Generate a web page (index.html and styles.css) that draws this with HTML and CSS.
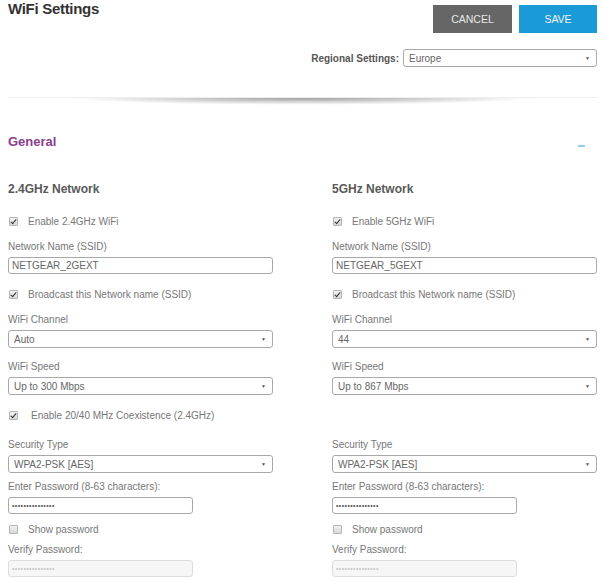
FILE: index.html
```html
<!DOCTYPE html>
<html lang="en">
<head>
    <meta charset="UTF-8">
    <meta name="viewport" content="width=device-width, initial-scale=1.0">
    <title>WiFi Settings</title>
    <link rel="stylesheet" href="styles.css">
</head>
<body>
    <div class="header">
        <h1 class="title">WiFi Settings</h1>
        <div class="actions">
            <div class="buttons">
                <button class="btn btn-cancel">CANCEL</button>
                <button class="btn btn-save">SAVE</button>
            </div>
            <div class="region">
                <span class="region-label">Regional Settings:</span>
                <div class="select region-select"><select><option>Europe</option></select></div>
            </div>
        </div>
    </div>

    <div class="divider"></div>

    <div class="section-head">
        <h2 class="section-title">General</h2>
        <span class="collapse"></span>
    </div>

    <div class="columns">
        <div class="col">
            <h3 class="net-title">2.4GHz Network</h3>
            <label class="check"><input type="checkbox" checked> Enable 2.4GHz WiFi</label>
            <div class="field">
                <label>Network Name (SSID)</label>
                <input class="text" type="text" value="NETGEAR_2GEXT">
            </div>
            <label class="check"><input type="checkbox" checked> Broadcast this Network name (SSID)</label>
            <div class="field">
                <label>WiFi Channel</label>
                <div class="select"><select><option>Auto</option></select></div>
            </div>
            <div class="field">
                <label>WiFi Speed</label>
                <div class="select"><select><option>Up to 300 Mbps</option></select></div>
            </div>
            <label class="check check-wide"><input type="checkbox" checked> Enable 20/40 MHz Coexistence (2.4GHz)</label>
            <div class="field loose">
                <label>Security Type</label>
                <div class="select"><select><option>WPA2-PSK [AES]</option></select></div>
            </div>
            <div class="field tight">
                <label>Enter Password (8-63 characters):</label>
                <input class="text pass" type="password" value="passwordpasswor">
            </div>
            <label class="check tight"><input type="checkbox"> Show password</label>
            <div class="field tight">
                <label>Verify Password:</label>
                <input class="text pass" type="password" value="passwordpasswor" disabled>
            </div>
        </div>

        <div class="col">
            <h3 class="net-title">5GHz Network</h3>
            <label class="check"><input type="checkbox" checked> Enable 5GHz WiFi</label>
            <div class="field">
                <label>Network Name (SSID)</label>
                <input class="text" type="text" value="NETGEAR_5GEXT">
            </div>
            <label class="check"><input type="checkbox" checked> Broadcast this Network name (SSID)</label>
            <div class="field">
                <label>WiFi Channel</label>
                <div class="select"><select><option>44</option></select></div>
            </div>
            <div class="field">
                <label>WiFi Speed</label>
                <div class="select"><select><option>Up to 867 Mbps</option></select></div>
            </div>
            <div class="check spacer"></div>
            <div class="field loose">
                <label>Security Type</label>
                <div class="select"><select><option>WPA2-PSK [AES]</option></select></div>
            </div>
            <div class="field tight">
                <label>Enter Password (8-63 characters):</label>
                <input class="text pass" type="password" value="passwordpasswor">
            </div>
            <label class="check tight"><input type="checkbox"> Show password</label>
            <div class="field tight">
                <label>Verify Password:</label>
                <input class="text pass" type="password" value="passwordpasswor" disabled>
            </div>
        </div>
    </div>
</body>
</html>
```

FILE: styles.css
```css
html, body {
    margin: 0;
    overflow: hidden;
}

body {
    font-family: "Liberation Sans", Arial, sans-serif;
    font-size: 10px;
    color: #777;
    background: #fff;
    padding: 0 7px 0 8px;
}

/* header */
.header {
    display: flex;
    justify-content: space-between;
    align-items: flex-start;
}

.title {
    margin: 0;
    font-size: 15px;
    line-height: 18px;
    font-weight: bold;
    color: #333;
    letter-spacing: -0.3px;
}

.actions {
    display: flex;
    flex-direction: column;
    align-items: flex-end;
}

.buttons {
    display: flex;
    gap: 7px;
    margin-top: 5px;
}

.btn {
    width: 79px;
    height: 28px;
    border: none;
    border-radius: 0;
    font-family: inherit;
    font-size: 10.5px;
    color: #f2f2f2;
    cursor: pointer;
}

.btn-cancel {
    background: #666;
    color: #e6e6e6;
}

.btn-save {
    width: 78px;
    background: #1a9bd8;
}

.region {
    display: flex;
    align-items: center;
    margin-top: 16px;
    height: 18px;
}

.region-label {
    font-size: 10px;
    font-weight: bold;
    color: #555;
    margin-right: 4px;
}

.region-select {
    width: 194px;
}

.divider {
    margin-top: 30px;
    height: 8px;
    border-top: 1px solid #eee;
    background: radial-gradient(ellipse 46% 100% at 50% 0, rgba(0, 0, 0, 0.38), rgba(0, 0, 0, 0) 85%);
}

/* section */
.section-head {
    display: flex;
    justify-content: space-between;
    align-items: center;
    margin-top: 28px;
    padding-right: 12px;
}

.section-title {
    margin: 0;
    font-size: 13px;
    line-height: 16px;
    font-weight: bold;
    color: #8a3e8e;
}

.collapse {
    width: 7px;
    height: 2px;
    background: #8cd0ec;
    margin-top: 7px;
}

.columns {
    display: grid;
    grid-template-columns: 265px 265px;
    column-gap: 59px;
    margin-top: 32px;
}

.net-title {
    margin: 0;
    font-size: 12px;
    line-height: 14px;
    font-weight: bold;
    color: #595959;
}

/* checkboxes */
.check {
    display: flex;
    align-items: center;
    height: 14px;
    margin-top: 13px;
    color: #777;
}

.net-title + .check {
    margin-top: 18px;
}

.check input {
    appearance: none;
    -webkit-appearance: none;
    position: relative;
    width: 9px;
    height: 9px;
    margin: 0 10px 0 1px;
    border: 1px solid #b5b5b5;
    border-radius: 1px;
    background: linear-gradient(#f2f2f2, #d8d8d8);
}

.check input:checked::after {
    content: "";
    position: absolute;
    left: 2px;
    top: 0;
    width: 2px;
    height: 5px;
    border: solid #333;
    border-width: 0 1.5px 1.5px 0;
    transform: rotate(40deg);
}

.check-wide input {
    margin-right: 13px;
}

/* fields */
.field {
    margin-top: 13px;
}

.field label {
    display: block;
    line-height: 12px;
    margin-bottom: 4px;
    color: #777;
}

.loose {
    margin-top: 17px;
}

.tight {
    margin-top: 8px;
}

.text {
    display: block;
    box-sizing: border-box;
    width: 100%;
    height: 17px;
    padding: 0 3px;
    border: 1px solid #a8a8a8;
    border-radius: 3px;
    font-family: inherit;
    font-size: 10px;
    color: #666;
    outline: none;
}

.pass {
    width: 185px;
    font-size: 7px;
    letter-spacing: 0.4px;
    color: #555;
}

.pass:disabled {
    background: #f6f6f6;
    border-color: #ddd;
    color: #c8c8c8;
}

.select {
    position: relative;
}

.select select {
    appearance: none;
    -webkit-appearance: none;
    display: block;
    box-sizing: border-box;
    width: 100%;
    height: 18px;
    padding: 0 16px 0 5px;
    border: 1px solid #a8a8a8;
    border-radius: 3px;
    background: #fff;
    font-family: inherit;
    font-size: 10px;
    color: #666;
    outline: none;
}

.select::after {
    content: "\25BC";
    position: absolute;
    right: 7px;
    top: 6px;
    font-size: 5px;
    color: #555;
    pointer-events: none;
}
```
